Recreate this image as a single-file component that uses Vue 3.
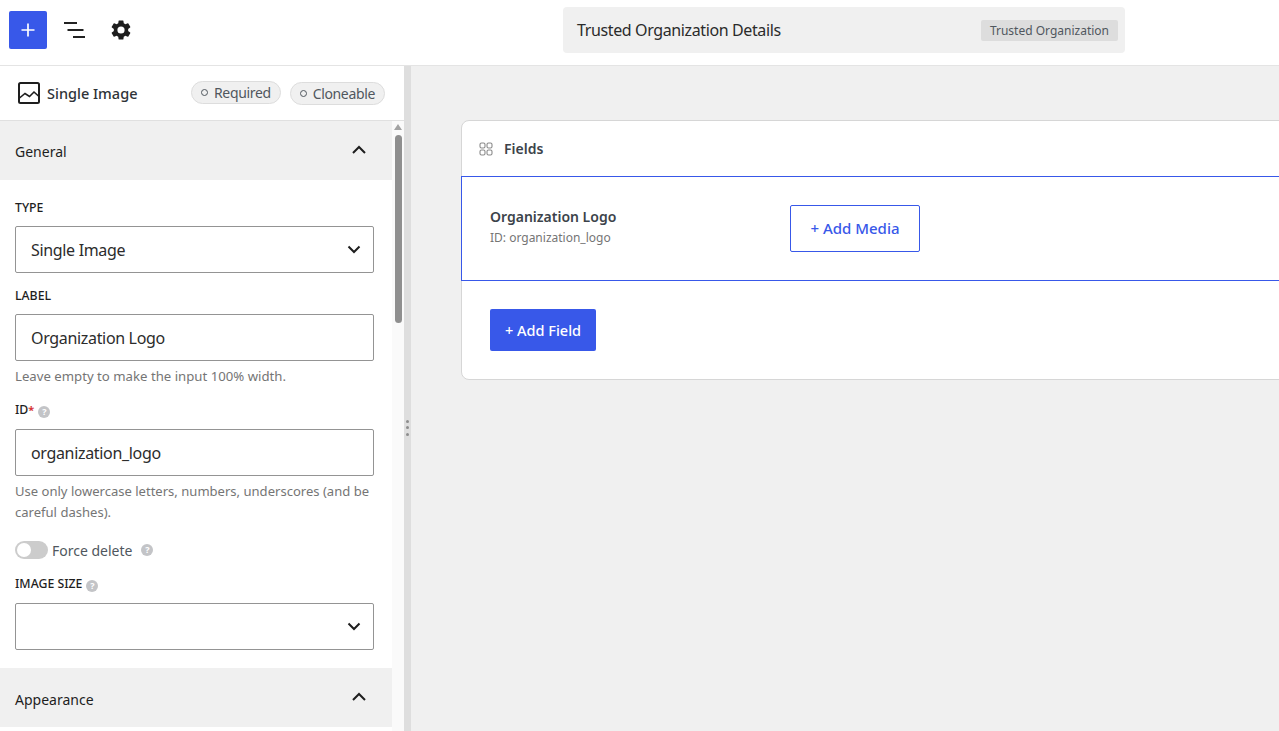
<script setup>
</script>

<template>
  <div class="app">
    <header class="topbar">
      <div class="tools">
        <button class="add-btn" aria-label="Add">
          <svg width="16" height="16" viewBox="0 0 16 16"><path d="M8 1.500v13M1.500 8h13" stroke="#fff" stroke-width="1.700" /></svg>
        </button>
        <svg class="list-icon" width="22" height="16" viewBox="0 0 22 16"><path d="M0 1h13M3.500 8h16M9 15h12" stroke="#222" stroke-width="2" fill="none" /></svg>
        <svg class="gear" width="24" height="24" viewBox="0 0 24 24"><path fill="#1e1e1e" d="M19.140 12.940c.04-.300.060-.610.060-.940s-.020-.640-.070-.940l2.030-1.580a.490.490 0 0 0 .120-.610l-1.920-3.320a.490.490 0 0 0-.590-.220l-2.390.960a7 7 0 0 0-1.620-.940l-.360-2.540a.480.480 0 0 0-.480-.410h-3.840a.480.480 0 0 0-.470.410l-.360 2.540a7.200 7.200 0 0 0-1.620.940l-2.390-.960a.480.480 0 0 0-.590.220L2.740 8.870a.470.470 0 0 0 .120.610l2.030 1.580c-.050.300-.090.630-.090.940s.020.640.07.940l-2.030 1.580a.490.490 0 0 0-.120.610l1.920 3.320c.120.220.370.290.590.220l2.390-.960c.500.380 1.030.700 1.620.940l.360 2.540c.050.240.240.410.480.410h3.840c.240 0 .440-.170.470-.410l.360-2.540a7 7 0 0 0 1.620-.940l2.390.960c.220.080.470 0 .590-.220l1.920-3.320a.470.470 0 0 0-.120-.610zM12 15.600a3.600 3.600 0 1 1 0-7.200 3.600 3.600 0 0 1 0 7.200z" /></svg>
      </div>
      <div class="title-box">
        <span class="title">Trusted Organization Details</span>
        <span class="slug">Trusted Organization</span>
      </div>
    </header>

    <div class="body">
      <aside class="sidebar">
        <div class="side-head">
          <svg class="image-icon" width="24" height="24" viewBox="0 0 24 24"><rect x="2" y="2" width="20" height="20" rx="1.500" fill="none" stroke="#1e1e1e" stroke-width="2" /><path d="M2.500 17 8 12.500l4.500 3 4.500-4.500 5 4.500" fill="none" stroke="#1e1e1e" stroke-width="1.600" /></svg>
          <strong class="side-title">Single Image</strong>
          <span class="pill pill-required"><i></i>Required</span>
          <span class="pill"><i></i>Cloneable</span>
        </div>

        <div class="side-scroll">
          <div class="side-content">
            <div class="section-head section-general">
              <span>General</span>
              <svg class="chev-up" width="16" height="10" viewBox="0 0 16 10"><path d="M2 8l6-6 6 6" fill="none" stroke="#1e1e1e" stroke-width="2" /></svg>
            </div>

            <div class="form">
              <div class="label">TYPE</div>
              <div class="control">
                <span>Single Image</span>
                <svg width="14" height="9" viewBox="0 0 14 9"><path d="M1.500 1.500 7 7l5.500-5.500" fill="none" stroke="#1e1e1e" stroke-width="2" /></svg>
              </div>

              <div class="label label-next">LABEL</div>
              <div class="control"><span>Organization Logo</span></div>
              <p class="help">Leave empty to make the input 100% width.</p>

              <div class="label label-id">ID<em>*</em><span class="q">?</span></div>
              <div class="control"><span>organization_logo</span></div>
              <p class="help help-id">Use only lowercase letters, numbers, underscores (and be careful dashes).</p>

              <div class="toggle-row">
                <span class="toggle"><b></b></span>
                <span class="toggle-text">Force delete</span>
                <span class="q q-toggle">?</span>
              </div>

              <div class="label label-size">IMAGE SIZE<span class="q">?</span></div>
              <div class="control">
                <span></span>
                <svg width="14" height="9" viewBox="0 0 14 9"><path d="M1.500 1.500 7 7l5.500-5.500" fill="none" stroke="#1e1e1e" stroke-width="2" /></svg>
              </div>
            </div>

            <div class="section-head">
              <span>Appearance</span>
              <svg class="chev-up" width="16" height="10" viewBox="0 0 16 10"><path d="M2 8l6-6 6 6" fill="none" stroke="#1e1e1e" stroke-width="2" /></svg>
            </div>
          </div>

          <div class="scrollbar">
            <span class="arrow"></span>
            <span class="thumb"></span>
          </div>
        </div>
      </aside>

      <div class="splitter">
        <span></span><span></span><span></span>
      </div>

      <main class="main">
        <section class="card">
          <div class="card-head">
            <svg width="14" height="14" viewBox="0 0 14 14" fill="none" stroke="#8a8a8a" stroke-width="1.100"><rect x="1" y="1" width="5" height="5" rx="1.500" /><rect x="8" y="1" width="5" height="5" rx="1.500" /><rect x="1" y="8" width="5" height="5" rx="1.500" /><rect x="8" y="8" width="5" height="5" rx="1.500" /></svg>
            <strong>Fields</strong>
          </div>
          <div class="field-row">
            <div class="field-info">
              <strong>Organization Logo</strong>
              <small>ID: organization_logo</small>
            </div>
            <button class="media-btn">+ Add Media</button>
          </div>
          <div class="card-foot">
            <button class="field-btn">+ Add Field</button>
          </div>
        </section>
      </main>
    </div>
  </div>
</template>

<style>
html, body {
  margin: 0;
  height: 100%;
  overflow: hidden;
}
</style>

<style scoped>
* {
  box-sizing: border-box;
}

.app {
  width: 1279px;
  height: 731px;
  display: flex;
  flex-direction: column;
  overflow: hidden;
  font-family: "Noto Sans", "Open Sans", Arial, sans-serif;
  color: #1e1e1e;
  background: #fff;
}

.topbar {
  height: 66px;
  flex: none;
  display: flex;
  align-items: flex-start;
  border-bottom: 1px solid #e4e4e4;
  background: #fff;
}

.tools {
  width: 563px;
  flex: none;
  display: flex;
  align-items: center;
  padding: 11px 0 0 9px;
}

.add-btn {
  width: 38px;
  height: 38px;
  padding: 0;
  display: flex;
  align-items: center;
  justify-content: center;
  border: 0;
  border-radius: 2px;
  background: #3858e9;
}

.list-icon {
  margin-left: 17px;
}

.gear {
  margin-left: 23px;
}

.title-box {
  width: 562px;
  height: 46px;
  margin-top: 7px;
  display: flex;
  align-items: center;
  justify-content: space-between;
  padding: 0 7px 0 14px;
  border-radius: 4px;
  background: #f0f0f0;
}

.title {
  font-size: 16px;
  color: #2b2b2b;
  letter-spacing: -0.38px;
}

.slug {
  padding: 0 9px;
  height: 21px;
  line-height: 21px;
  font-size: 12px;
  color: #50575e;
  border-radius: 2px;
  background: #ddd;
}

.body {
  flex: 1;
  min-height: 0;
  display: flex;
}

.sidebar {
  width: 404px;
  flex: none;
  display: flex;
  flex-direction: column;
  background: #fff;
}

.side-head {
  height: 55px;
  flex: none;
  display: flex;
  align-items: center;
  padding: 0 19px 0 17px;
  border-bottom: 1px solid #e0e0e0;
}

.side-title {
  margin-left: 6px;
  margin-right: auto;
  font-size: 14.500px;
  font-weight: 500;
  color: #2f3338;
}

.pill {
  display: inline-flex;
  align-items: center;
  height: 23px;
  margin-left: 9px;
  padding: 0 9px;
  font-size: 14px;
  letter-spacing: -0.35px;
  color: #50575e;
  border: 1px solid #ddd;
  border-radius: 12px;
  background: #f0f0f0;
}

.pill i {
  width: 7px;
  height: 7px;
  margin-right: 6px;
  border: 1px solid #50575e;
  border-radius: 50%;
}

.pill-required {
  margin-top: -2px;
}

.side-scroll {
  flex: 1;
  min-height: 0;
  display: flex;
  overflow: hidden;
}

.side-content {
  width: 392px;
  flex: none;
}

.section-head {
  height: 59px;
  display: flex;
  align-items: center;
  justify-content: space-between;
  padding: 3px 25px 0 15px;
  font-size: 14px;
  background: #f0f0f0;
}

.chev-up {
  margin-top: -5px;
}

.section-general {
  padding-top: 1px;
}

.section-general .chev-up {
  margin-top: -3px;
}

.form {
  height: 488px;
  padding: 18px 18px 0 15px;
}

.label {
  height: 20px;
  line-height: 20px;
  margin-bottom: 8px;
  font-size: 12.300px;
  font-weight: 500;
  color: #1e1e1e;
}

.label-next {
  margin-top: 13px;
}

.label-id {
  margin-top: 13px;
  margin-bottom: 9px;
}

.label-size {
  margin-top: 15px;
  margin-bottom: 9px;
}

.label em {
  font-size: 11px;
  font-weight: 700;
  font-style: normal;
  color: #d63638;
}

.q {
  display: inline-block;
  width: 12px;
  height: 12px;
  margin-left: 4px;
  line-height: 12px;
  text-align: center;
  vertical-align: -1px;
  font-size: 9px;
  font-weight: 700;
  color: #fff;
  border-radius: 50%;
  background: #c3c4c7;
}

.control {
  height: 47px;
  display: flex;
  align-items: center;
  justify-content: space-between;
  padding: 0 12px 0 15px;
  font-size: 16px;
  letter-spacing: -0.33px;
  color: #2c2c2c;
  border: 1px solid #949494;
  border-radius: 2px;
  background: #fff;
}

.help {
  margin: 5px 0 0;
  font-size: 13.200px;
  line-height: 21px;
  color: #757575;
}

.help-id {
  font-size: 13.050px;
}

.toggle-row {
  display: flex;
  align-items: center;
  height: 18px;
  margin-top: 18px;
}

.toggle {
  width: 33px;
  height: 18px;
  padding: 2px;
  border-radius: 9px;
  background: #ccc;
}

.toggle b {
  display: block;
  width: 14px;
  height: 14px;
  border-radius: 50%;
  background: #fff;
}

.toggle-text {
  margin-left: 4px;
  font-size: 14px;
  color: #50575e;
}

.q-toggle {
  margin-left: 9px;
}

.scrollbar {
  width: 12px;
  flex: none;
  display: flex;
  flex-direction: column;
  align-items: center;
  background: #fafafa;
}

.arrow {
  width: 0;
  height: 0;
  margin-top: 3px;
  border-left: 4px solid transparent;
  border-right: 4px solid transparent;
  border-bottom: 6px solid #a3a3a3;
}

.thumb {
  width: 7px;
  height: 188px;
  margin-top: 5px;
  border-radius: 4px;
  background: #8f8f8f;
}

.splitter {
  width: 7px;
  flex: none;
  display: flex;
  flex-direction: column;
  align-items: center;
  justify-content: center;
  gap: 3.500px;
  padding-top: 58px;
  background: #dedede;
}

.splitter span {
  width: 3px;
  height: 3px;
  border-radius: 50%;
  background: #8d8d8d;
}

.main {
  flex: 1;
  min-width: 0;
  padding: 54px 0 0 50px;
  overflow: hidden;
  background: #f0f0f0;
}

.card {
  width: 1000px;
  border: 1px solid #d6d6d6;
  border-radius: 8px 0 0 8px;
  background: #fff;
}

.card-head {
  height: 55px;
  display: flex;
  align-items: center;
  gap: 11px;
  padding-left: 17px;
  font-size: 14px;
}

.card-head strong {
  font-weight: 600;
  color: #3c434a;
}

.field-row {
  height: 105px;
  margin-left: -1px;
  display: flex;
  align-items: center;
  padding: 0 0 0 28px;
  border: 1px solid #3858e9;
  border-right: 0;
}

.field-info {
  width: 300px;
  display: flex;
  flex-direction: column;
  margin-top: -4px;
}

.field-info strong {
  font-size: 14px;
  line-height: 20px;
  font-weight: 600;
  color: #3c434a;
}

.field-info small {
  margin-top: 2px;
  font-size: 12px;
  line-height: 17px;
  color: #757575;
}

.media-btn {
  width: 130px;
  height: 47px;
  padding: 0 0 2px;
  font-family: inherit;
  font-size: 15px;
  font-weight: 500;
  color: #3858e9;
  border: 1px solid #3858e9;
  border-radius: 2px;
  background: #fff;
}

.card-foot {
  height: 98px;
  padding: 28px 0 0 28px;
}

.field-btn {
  width: 106px;
  height: 42px;
  padding: 0;
  font-family: inherit;
  font-size: 14.500px;
  font-weight: 500;
  color: #fff;
  border: 0;
  border-radius: 2px;
  background: #3858e9;
}
</style>
